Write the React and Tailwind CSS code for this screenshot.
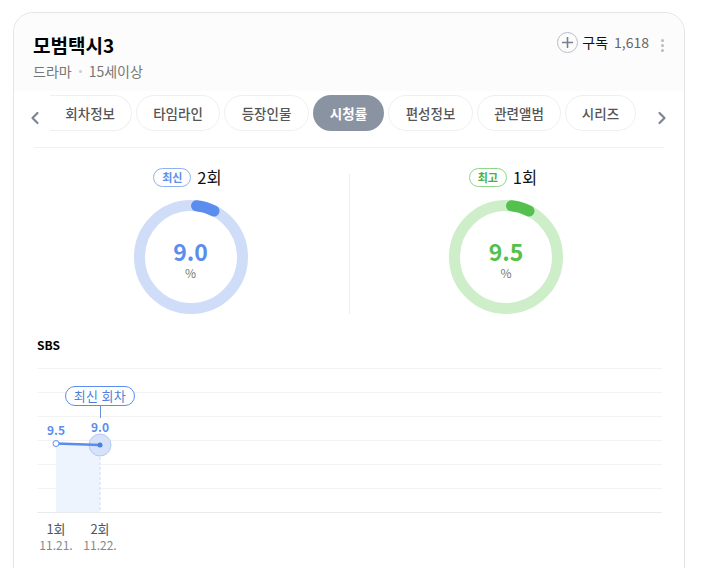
import React from 'react'
import { ChevronLeft, ChevronRight } from 'lucide-react'

const tabs = [
  { name: '타임라인', w: 'w-[84px]' },
  { name: '등장인물', w: 'w-[85px]' },
  { name: '시청률', w: 'w-[71px]', active: true },
  { name: '편성정보', w: 'w-[85px]' },
  { name: '관련앨범', w: 'w-[84px]' },
  { name: '시리즈', w: 'w-[71px]' },
]

function Ring({ value, color, track, badge, badgeClass, round }) {
  return (
    <div className="flex flex-col items-center">
      <div className="mr-[6px] flex h-[26px] items-center gap-[6px]">
        <span className={`flex h-[19px] w-[38px] items-center justify-center rounded-full border bg-white text-[11px] font-bold ${badgeClass}`}>{badge}</span>
        <span className="text-[16.5px] text-[#111]">{round}</span>
      </div>
      <div className="relative mt-[10px] h-[114px] w-[114px]">
        <svg width="114" height="114" viewBox="0 0 114 114">
          <circle cx="57" cy="57" r="51.5" fill="none" stroke={track} strokeWidth="11" />
          <path d="M62.5 5.8 A51.5 51.5 0 0 1 80 11" fill="none" stroke={color} strokeWidth="11" strokeLinecap="round" />
        </svg>
        <div className="absolute inset-0 flex flex-col items-center justify-center pt-[6px]">
          <span className="text-[23px] leading-[24px] font-bold" style={{ color }}>{value}</span>
          <span className="mt-[2px] text-[12px] leading-[16px] text-[#777]">%</span>
        </div>
      </div>
    </div>
  )
}

function Chart() {
  return (
    <div className="relative mt-[14px] h-[146px]">
      <svg width="625" height="146" viewBox="0 0 625 146">
        {[0, 24, 48, 72, 96, 120].map(y => (
          <line key={y} x1="0" x2="625" y1={y + 0.5} y2={y + 0.5} stroke="#f2f3f5" />
        ))}
        <rect x="19" y="76" width="44" height="68" fill="#eef4fe" />
        <line x1="0" x2="625" y1="144.5" y2="144.5" stroke="#e9eaec" />
        <line x1="63" x2="63" y1="84" y2="144" stroke="#cfdcf7" strokeDasharray="3 2" />
        <line x1="63.5" x2="63.5" y1="38" y2="50" stroke="#6b8fd9" />
        <circle cx="63" cy="77" r="11" fill="#d5e2fa" stroke="#b5caf3" />
        <line x1="19" x2="63" y1="75.5" y2="77" stroke="#5b8dee" strokeWidth="2.5" />
        <circle cx="19" cy="75.5" r="3" fill="#fff" stroke="#5b8dee" />
        <circle cx="63" cy="77" r="2.5" fill="#4f7fdc" />
      </svg>
      <span className="absolute top-[18px] left-[28px] flex h-[20px] w-[70px] items-center justify-center rounded-full border border-[#5b8dee] bg-white text-[13px] tracking-[0.3px] text-[#4f7fdc]">최신 회차</span>
      <span className="absolute top-[53px] left-[10px] text-[12px] font-bold text-[#5b8dee]">9.5</span>
      <span className="absolute top-[50px] left-[54px] text-[12px] font-bold text-[#5b8dee]">9.0</span>
    </div>
  )
}

export default function App() {
  return (
    <div className="h-[568px] overflow-hidden bg-white pt-[12px] pl-[13px] font-['Noto_Sans_CJK_KR','Noto_Sans',sans-serif]">
      <div className="h-[600px] w-[672px] rounded-[20px] border border-[#e4e4e4] bg-white">
        <div className="h-[78px] rounded-t-[20px] bg-[#fcfcfc] px-[19px] pt-[19px]">
          <div className="flex items-start justify-between">
            <div>
              <h1 className="text-[19px] leading-[26px] font-bold text-black">모범택시3</h1>
              <p className="mt-[3px] flex items-center text-[14px] leading-[20px] text-[#777]">
                드라마<span className="mx-[7px] h-[3px] w-[3px] rounded-full bg-[#ccc]" />15세이상
              </p>
            </div>
            <div className="flex items-center">
              <span className="flex h-[21px] w-[21px] items-center justify-center rounded-full border border-[#b9bec8]">
                <svg width="11" height="11" viewBox="0 0 11 11"><path d="M5.5 0v11M0 5.5h11" stroke="#77808f" strokeWidth="1.6" /></svg>
              </span>
              <span className="ml-[4px] text-[14px] text-[#111]">구독</span>
              <span className="ml-[6px] text-[14px] text-[#666]">1,618</span>
              <span className="mr-[1px] ml-[12px] flex flex-col gap-[2px] pt-[5px]">
                <i className="h-[3px] w-[3px] rounded-full bg-[#bbb]" />
                <i className="h-[3px] w-[3px] rounded-full bg-[#bbb]" />
                <i className="h-[3px] w-[3px] rounded-full bg-[#bbb]" />
              </span>
            </div>
          </div>
        </div>
        <div className="mx-[20px] border-b border-[#f0f1f3]">
          <div className="relative mt-[4px] flex h-[52px] items-start">
            <ChevronLeft className="absolute top-[13px] left-[-9px]" size={20} strokeWidth={2.6} color="#7c8594" />
            <div className="ml-[16px] flex gap-[4px]">
              <span className="flex h-[36px] w-[82px] items-center justify-end rounded-r-full border-y border-r border-[#efefef] pr-[16px] text-[13.5px] font-medium text-[#555]">회차정보</span>
              {tabs.map(t => (
                <span key={t.name} className={t.active
                  ? `flex h-[36px] items-center justify-center rounded-full bg-[#8a93a1] text-[13.5px] font-bold text-white ${t.w}`
                  : `flex h-[36px] items-center justify-center rounded-full border border-[#efefef] bg-white text-[13.5px] font-medium text-[#555] ${t.w}`}>{t.name}</span>
              ))}
            </div>
            <ChevronRight className="absolute top-[13px] right-[-8px]" size={20} strokeWidth={2.6} color="#7c8594" />
          </div>
        </div>
        <div className="mt-[16px] flex px-[20px]">
          <div className="w-[315px] pr-[2px]"><Ring value="9.0" color="#5b8dee" track="#d0ddf8" badge="최신" badgeClass="border-[#8fb0f2] text-[#5b8dee]" round="2회" /></div>
          <div className="mt-[10px] w-px bg-[#eceef0]" />
          <div className="flex-1 pr-[2px]"><Ring value="9.5" color="#54c04e" track="#cdeec9" badge="최고" badgeClass="border-[#8fd68a] text-[#46b040]" round="1회" /></div>
        </div>
        <div className="mt-[22px] pl-[23px]">
          <h2 className="text-[12px] leading-[18px] font-bold text-black">SBS</h2>
          <Chart />
          <div className="relative h-[40px]">
            <div className="absolute top-[7px] left-[3px] flex w-[32px] flex-col items-center whitespace-nowrap">
              <span className="text-[13px] leading-[16px] text-[#555]">1회</span>
              <span className="text-[12px] leading-[15px] text-[#888]">11.21.</span>
            </div>
            <div className="absolute top-[7px] left-[47px] flex w-[32px] flex-col items-center whitespace-nowrap">
              <span className="text-[13px] leading-[16px] text-[#555]">2회</span>
              <span className="text-[12px] leading-[15px] text-[#888]">11.22.</span>
            </div>
          </div>
        </div>
      </div>
    </div>
  )
}
